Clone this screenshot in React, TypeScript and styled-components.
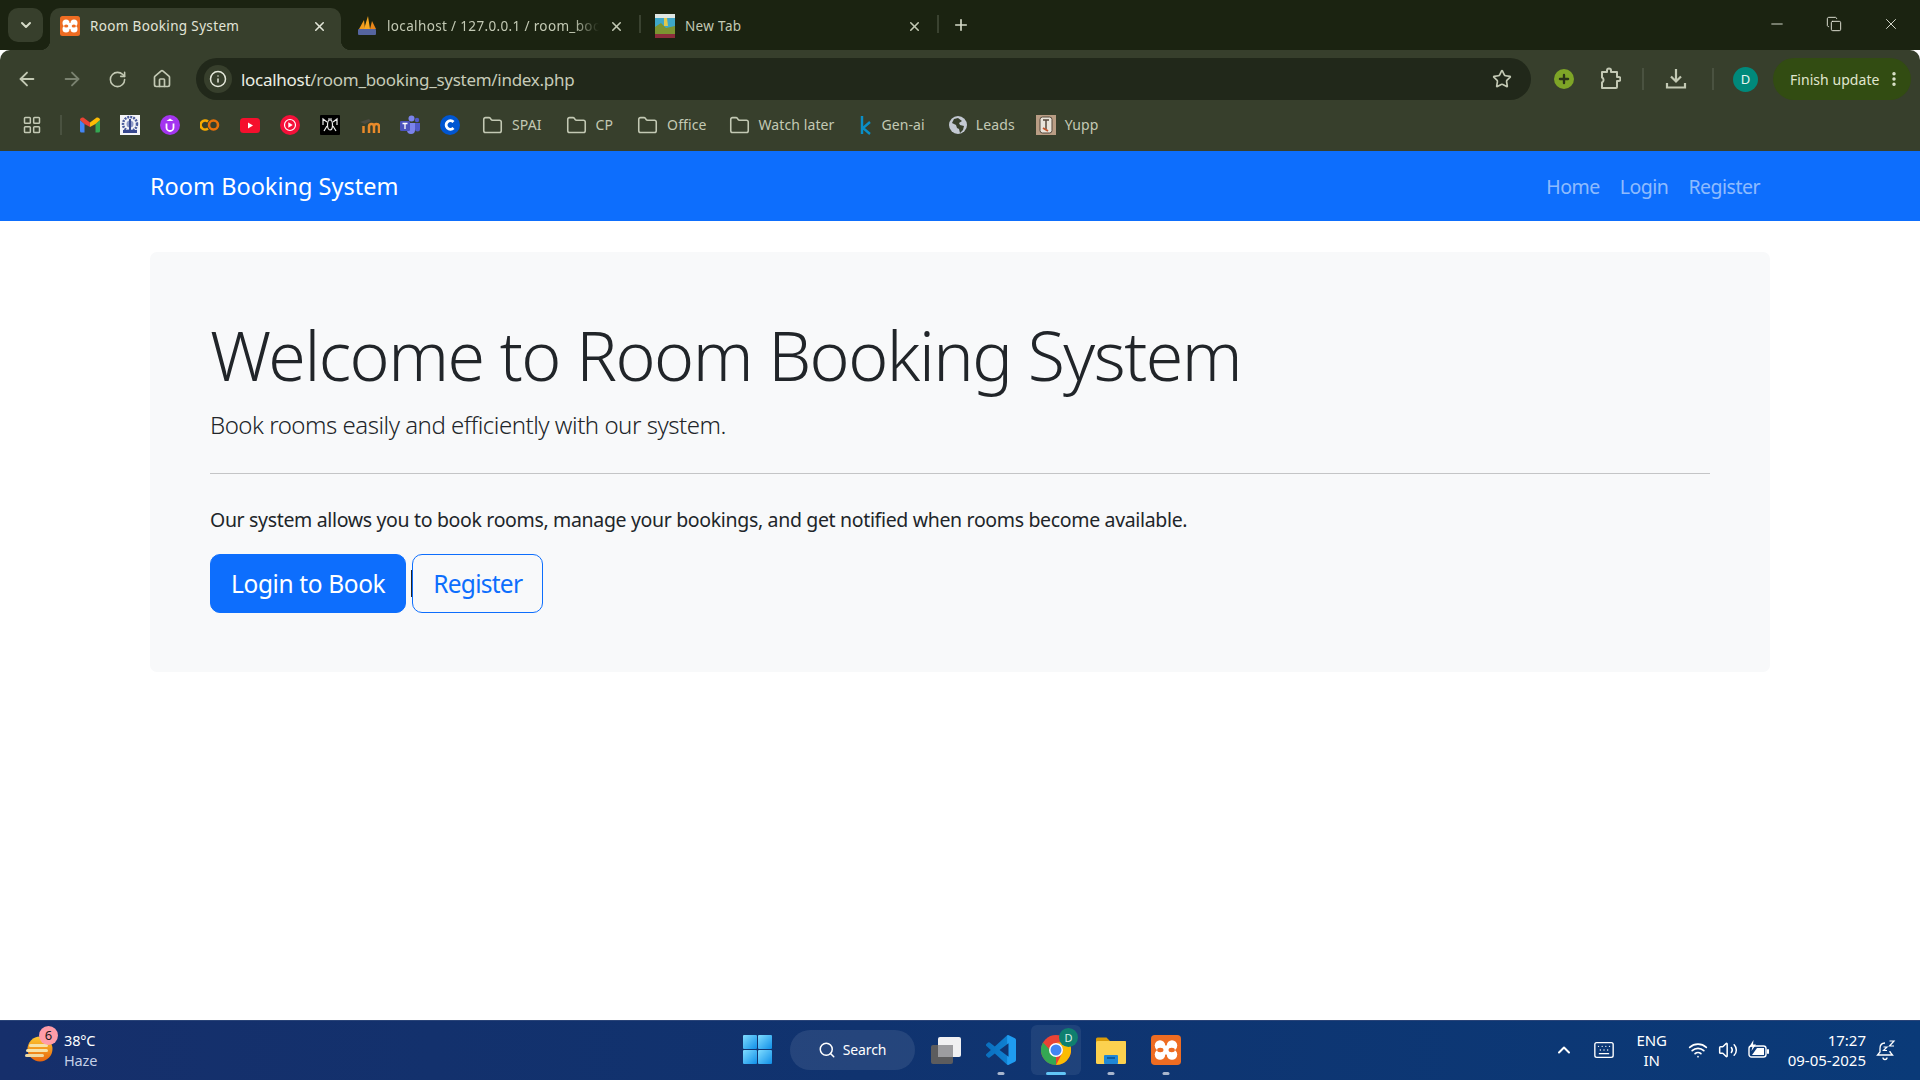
import React from "react";
import styled, { createGlobalStyle } from "styled-components";
import {
  ArrowLeft,
  ArrowRight,
  ChevronDown,
  ChevronUp,
  Folder,
  Home,
  Info,
  Keyboard,
  LayoutGrid,
  Minus,
  Plus,
  RotateCw,
  Search,
  Star,
  Volume2,
  Wifi,
  X,
  MoreVertical,
  Copy,
} from "lucide-react";

const uiFont = `"Noto Sans", "Open Sans", sans-serif`;

const GlobalStyle = createGlobalStyle`
  html, body {
    margin: 0;
    padding: 0;
    height: 100%;
    background: #fff;
    overflow: hidden;
  }
  #root {
    height: 100%;
  }
  * {
    box-sizing: border-box;
  }
`;

const Screen = styled.div`
  height: 1080px;
  display: flex;
  flex-direction: column;
  font-family: ${uiFont};
`;

/* browser chrome */

const TabStrip = styled.div`
  height: 50px;
  background: #1b2311;
  display: flex;
  align-items: flex-end;
  padding-left: 8px;
  color: #d5dac8;
`;

const TabListButton = styled.div`
  width: 35px;
  height: 34px;
  margin: 0 7px 8px 0;
  border-radius: 10px;
  background: #373f2c;
  display: flex;
  align-items: center;
  justify-content: center;
`;

const Tab = styled.div<{ $active?: boolean; $divider?: boolean }>`
  position: relative;
  width: 291px;
  height: 42px;
  margin-right: ${(p) => (p.$active ? "6px" : "7px")};
  padding: 0 14px 6px 10px;
  display: flex;
  align-items: center;
  gap: 10px;
  font-size: 13.5px;
  letter-spacing: 0.35px;
  border-radius: 10px 10px 0 0;
  background: ${(p) => (p.$active ? "#373f2c" : "transparent")};
  color: ${(p) => (p.$active ? "#e2e5d8" : "#c3c9b4")};

  ${(p) =>
    p.$active &&
    `
    &::before, &::after {
      content: "";
      position: absolute;
      bottom: 0;
      width: 10px;
      height: 10px;
      background: radial-gradient(circle at var(--cx) 0, #1b2311 10px, #373f2c 10.5px);
    }
    &::before { left: -10px; --cx: 0; }
    &::after { right: -10px; --cx: 100%; }
  `}

  ${(p) =>
    p.$divider &&
    `
    &::after {
      content: "";
      position: absolute;
      right: -3px;
      top: 7px;
      width: 2px;
      height: 18px;
      background: #3a4230;
    }
  `}
`;

const TabTitle = styled.span<{ $fade?: boolean }>`
  flex: 1;
  height: 20px;
  line-height: 20px;
  white-space: nowrap;
  overflow: hidden;
  ${(p) =>
    p.$fade &&
    `
    -webkit-mask-image: linear-gradient(to right, #000 88%, transparent);
    mask-image: linear-gradient(to right, #000 88%, transparent);
  `}
`;

const NewTab = styled.div`
  margin: 0 0 13px 6px;
  height: 24px;
  width: 24px;
  display: flex;
  align-items: center;
  justify-content: center;
  color: #d5dac8;
`;

const WindowControls = styled.div`
  margin-left: auto;
  height: 50px;
  display: flex;
  align-items: center;
  color: #e8eade;
  padding: 0 20px 3px 0;
  gap: 40px;
`;

const Toolbar = styled.div`
  height: 58px;
  background: #373f2c;
  border-radius: 10px 10px 0 0;
  display: flex;
  align-items: center;
  padding: 0 8px 0 16px;
  color: #c3c9b4;
`;

const NavButtons = styled.div`
  display: flex;
  align-items: center;
  gap: 23px;
  width: 180px;
`;

const NavSlot = styled.div`
  width: 22px;
  display: flex;
  justify-content: center;
`;

const Omnibox = styled.div`
  width: 1335px;
  height: 42px;
  border-radius: 21px;
  background: #21281a;
  display: flex;
  align-items: center;
  padding: 0 19px 0 8px;
  color: #e6e9dc;
`;

const SiteInfo = styled.div`
  width: 28px;
  height: 28px;
  border-radius: 50%;
  background: #373f2c;
  display: flex;
  align-items: center;
  justify-content: center;
  margin-right: 9px;
`;

const Url = styled.span`
  flex: 1;
  font-size: 17px;
  letter-spacing: -0.28px;
  color: #c6cbb8;
  b {
    font-weight: 400;
    color: #eceee3;
  }
`;

const ActionSlot = styled.div<{ $w: number }>`
  width: ${(p) => p.$w}px;
  display: flex;
  justify-content: flex-end;
  align-items: center;
`;

const ToolbarDivider = styled.div`
  width: 2px;
  height: 22px;
  background: #4a5240;
  margin-right: 18px;
`;

const GreenPlus = styled.div`
  width: 20px;
  height: 20px;
  border-radius: 50%;
  background: #7ea527;
  color: #2a3318;
  display: flex;
  align-items: center;
  justify-content: center;
`;

const Avatar = styled.div`
  width: 25px;
  height: 25px;
  border-radius: 50%;
  background: #00897b;
  color: #e8f5f0;
  font-size: 13px;
  display: flex;
  align-items: center;
  justify-content: center;
`;

const UpdatePill = styled.div`
  height: 42px;
  width: 138px;
  margin-left: 15px;
  border-radius: 21px;
  background: #324c12;
  color: #e0e6cf;
  font-size: 14px;
  letter-spacing: 0.05px;
  display: flex;
  align-items: center;
  justify-content: space-between;
  padding: 0 8px 0 17px;
  white-space: nowrap;
`;

const BookmarksBar = styled.div`
  height: 43px;
  background: #373f2c;
  display: flex;
  align-items: flex-start;
  padding: 7px 0 0 22px;
  color: #c3c9b4;
  font-size: 14px;
  letter-spacing: 0.1px;
`;

const BookmarkDivider = styled.div`
  width: 2px;
  height: 20px;
  background: #4a5240;
  margin: 0 8px 0 18px;
`;

const IconSlot = styled.div`
  width: 40px;
  height: 20px;
  display: flex;
  align-items: center;
  justify-content: center;
`;

const Bookmark = styled.div<{ $ml: number }>`
  margin-left: ${(p) => p.$ml}px;
  height: 20px;
  display: flex;
  align-items: center;
  gap: 9px;
  white-space: nowrap;
`;

const BookmarkLabel = styled.span`
  margin-top: -2px;
`;

/* page */

const Navbar = styled.nav`
  height: 70px;
  background: #0d6efd;
  padding: 0 150px;
  display: flex;
  align-items: center;
  justify-content: space-between;
`;

const Brand = styled.a`
  color: #fff;
  font-size: 23.5px;
`;

const NavLinks = styled.div`
  display: flex;
`;

const NavLink = styled.a`
  padding: 0 10px;
  font-size: 19.5px;
  letter-spacing: -0.5px;
  color: rgba(255, 255, 255, 0.55);
`;

const Main = styled.main`
  flex: 1;
  padding: 31px 150px 0;
  background: #fff;
`;

const Jumbotron = styled.section`
  height: 420px;
  background: #f8f9fa;
  border-radius: 7px;
  padding: 60px;
  color: #212529;
`;

const Display = styled.h1`
  margin: 1px 0 0;
  font-size: 68px;
  font-weight: 300;
  line-height: 84px;
  letter-spacing: -1.5px;
  white-space: nowrap;
`;

const Lead = styled.p`
  margin: 9px 0 0;
  font-size: 24px;
  font-weight: 300;
  line-height: 37px;
  letter-spacing: -0.48px;
`;

const Rule = styled.hr`
  margin: 30px 0 0;
  border: 0;
  border-top: 1px solid #c4c5c6;
`;

const BodyText = styled.p`
  margin: 31px 0 0;
  font-size: 19.5px;
  line-height: 30px;
  letter-spacing: -0.335px;
`;

const ButtonRow = styled.div`
  margin-top: 19px;
  display: flex;
  align-items: center;
`;

const Button = styled.a<{ $outline?: boolean }>`
  height: 59px;
  padding: 0 20px;
  border-radius: 10px;
  display: flex;
  align-items: center;
  font-size: 24.5px;
  letter-spacing: ${(p) => (p.$outline ? "-0.75px" : "-0.38px")};
  border: 1px solid #0d6efd;
  background: ${(p) => (p.$outline ? "transparent" : "#0d6efd")};
  color: ${(p) => (p.$outline ? "#0d6efd" : "#fff")};
`;

const Caret = styled.span`
  width: 1px;
  height: 27px;
  margin-left: 5px;
  background: #212529;
`;

/* taskbar */

const Taskbar = styled.footer`
  height: 60px;
  padding-bottom: 2px;
  background: linear-gradient(90deg, #162f6b 0%, #10336f 45%, #0a3a78 100%);
  border-top: 1px solid #2a4478;
  display: grid;
  grid-template-columns: 1fr auto 1fr;
  align-items: center;
  color: #fff;
`;

const Weather = styled.div`
  display: flex;
  align-items: center;
  padding-left: 25px;
  gap: 11px;
`;

const WeatherIcon = styled.div`
  position: relative;
  width: 28px;
  height: 28px;
`;

const WeatherBadge = styled.span`
  position: absolute;
  top: -10px;
  left: 14px;
  width: 19px;
  height: 19px;
  border-radius: 50%;
  background: #ff9ca8;
  color: #1a1a1a;
  font-size: 13px;
  display: flex;
  align-items: center;
  justify-content: center;
`;

const TwoLines = styled.div<{ $align?: string }>`
  display: flex;
  flex-direction: column;
  align-items: ${(p) => p.$align || "flex-start"};
  font-size: 14.5px;
  line-height: 20px;
  letter-spacing: -0.15px;
`;

const Muted = styled.span`
  color: #c3cfe6;
`;

const TaskIcons = styled.div`
  display: flex;
  align-items: center;
  margin-left: 16px;
`;

const SearchPill = styled.div`
  width: 125px;
  height: 40px;
  margin: 0 4px 0 18px;
  border-radius: 20px;
  background: rgba(255, 255, 255, 0.09);
  display: flex;
  align-items: center;
  justify-content: center;
  gap: 7px;
  font-size: 14px;
  letter-spacing: -0.1px;
`;

const TaskSlot = styled.div<{ $active?: boolean; $dot?: boolean }>`
  position: relative;
  width: ${(p) => (p.$active ? "50px" : "55px")};
  margin: ${(p) => (p.$active ? "0 2.5px" : "0")};
  height: 50px;
  border-radius: 6px;
  display: flex;
  align-items: center;
  justify-content: center;
  background: ${(p) => (p.$active ? "rgba(255,255,255,0.07)" : "transparent")};

  ${(p) =>
    p.$dot &&
    `
    &::after {
      content: "";
      position: absolute;
      bottom: 0;
      left: 50%;
      transform: translateX(-50%);
      width: ${p.$active ? "20px" : "7px"};
      height: 3px;
      border-radius: 2px;
      background: ${p.$active ? "#62c6f7" : "#a9b6cd"};
    }
  `}
`;

const ChromeBadge = styled.span`
  position: absolute;
  top: 3px;
  right: 3px;
  width: 19px;
  height: 19px;
  border-radius: 50%;
  background: #0f7f6f;
  color: #d6efe8;
  font-size: 11px;
  display: flex;
  align-items: center;
  justify-content: center;
`;

const Tray = styled.div`
  display: flex;
  align-items: center;
  justify-content: flex-end;
  padding-right: 24px;
`;

const TrayKeyboard = styled.div`
  margin-left: 19px;
  display: flex;
`;

const TrayIcons = styled.div`
  display: flex;
  align-items: center;
  gap: 10px;
  margin: 0 18px 0 21px;
`;

const Language = styled(TwoLines)`
  margin-left: 21px;
  font-size: 15px;
`;

const Clock = styled(TwoLines)`
  margin-right: 10px;
  font-size: 15px;
  letter-spacing: 0;
`;

/* drawn favicons */

const XamppIcon = ({ size = 20 }: { size?: number }) => (
  <svg width={size} height={size} viewBox="0 0 20 20">
    <rect width="20" height="20" rx="2.5" fill="#ee6c22" />
    <circle cx="6" cy="7" r="3.5" fill="#fff" />
    <circle cx="14" cy="7" r="3.5" fill="#fff" />
    <circle cx="6" cy="13" r="3.5" fill="#fff" />
    <circle cx="14" cy="13" r="3.5" fill="#fff" />
    <rect x="6" y="7" width="8" height="6" fill="#fff" />
    <ellipse cx="6.200" cy="10" rx="2.100" ry="1.500" fill="#ee6c22" />
    <ellipse cx="13.800" cy="10" rx="2.100" ry="1.500" fill="#ee6c22" />
  </svg>
);

const PmaIcon = () => (
  <svg width="20" height="22" viewBox="0 0 20 22">
    <path d="M2 14 7 5l1 9z" fill="#f19b1d" />
    <path d="M7 14 11 1l2 13z" fill="#f7a823" />
    <path d="M13 14l2-8 4 8z" fill="#e8861a" />
    <rect x="1" y="14" width="18" height="6" rx="1" fill="#55659f" />
  </svg>
);

const NewTabIcon = () => (
  <svg width="20" height="24" viewBox="0 0 20 24">
    <rect width="20" height="24" rx="2" fill="#3ea7c9" />
    <rect y="0" width="20" height="4" fill="#dfe7e4" />
    <path d="M0 22V13l6-4 5 5 9-2v10z" fill="#7c9431" />
    <rect y="20" width="20" height="4" fill="#8c2c3c" />
    <path d="M9 4h3l1 8H9z" fill="#e3c84c" />
  </svg>
);

const GmailIcon = () => (
  <svg width="20" height="16" viewBox="0 0 20 16">
    <path d="M0 3v11a1.500 1.500 0 0 0 1.500 1.500H4.500V7z" fill="#4285f4" />
    <path d="M15.500 7v8.500h3A1.500 1.500 0 0 0 20 14V3z" fill="#34a853" />
    <path d="M4.500 7 0 3c0-2 2.300-3.200 4-2l6 4.500V10z" fill="#ea4335" />
    <path d="M15.500 7 20 3c0-2-2.300-3.200-4-2l-6 4.500V10z" fill="#fbbc04" />
  </svg>
);

const IitIcon = () => (
  <svg width="20" height="20" viewBox="0 0 20 20">
    <rect width="20" height="20" fill="#f4f4f8" />
    <circle cx="10" cy="9" r="7" fill="none" stroke="#4a5a9c" strokeWidth="2.500" strokeDasharray="2 1" />
    <circle cx="10" cy="9" r="3.500" fill="#8d97c5" />
    <path d="M9 4h2v13H9zM3 15h14v3H3z" fill="#37478f" />
  </svg>
);

const UdemyIcon = () => (
  <svg width="20" height="20" viewBox="0 0 20 20">
    <circle cx="10" cy="10" r="10" fill="#a435f0" />
    <path d="M6.500 8.500v4a3.500 3.500 0 0 0 7 0v-4" fill="none" stroke="#fff" strokeWidth="1.800" />
    <path d="M6.500 6 10 3.500 13.500 6z" fill="#fff" />
  </svg>
);

const ColabIcon = () => (
  <svg width="20" height="14" viewBox="0 0 20 14">
    <path d="M8 3.500a4.500 4.500 0 1 0 0 7" fill="none" stroke="#f9ab00" strokeWidth="2.600" />
    <circle cx="13.500" cy="7" r="4.500" fill="none" stroke="#e8710a" strokeWidth="2.600" />
  </svg>
);

const YoutubeIcon = () => (
  <svg width="20" height="15" viewBox="0 0 20 15">
    <rect width="20" height="15" rx="3.500" fill="#f50f2d" />
    <path d="M8 4.500v6l5-3z" fill="#fff" />
  </svg>
);

const YtMusicIcon = () => (
  <svg width="20" height="20" viewBox="0 0 20 20">
    <circle cx="10" cy="10" r="10" fill="#f5103a" />
    <circle cx="10" cy="10" r="5.500" fill="none" stroke="#fff" strokeWidth="1.200" />
    <path d="M8.300 7.300v5.400l4.400-2.700z" fill="#fff" />
  </svg>
);

const SpiderIcon = () => (
  <svg width="20" height="20" viewBox="0 0 20 20">
    <rect width="20" height="20" rx="1" fill="#000" />
    <ellipse cx="10" cy="10" rx="2.500" ry="5" fill="none" stroke="#eee" strokeWidth="1.200" />
    <path d="M7 7 3 4v6m10-3 4-3v6M7 11l-3 5m9-5 3 5M8 4l4 0" fill="none" stroke="#eee" strokeWidth="1.200" />
  </svg>
);

const MoodleIcon = () => (
  <svg width="20" height="15" viewBox="0 0 20 15">
    <path d="M9 15V8.500a2.500 2.500 0 0 1 5 0V15" fill="none" stroke="#e98a2a" strokeWidth="2.500" />
    <path d="M14 8.500a2.500 2.500 0 0 1 5 0V15" fill="none" stroke="#e98a2a" strokeWidth="2.500" />
    <path d="M3.500 15V8" fill="none" stroke="#e98a2a" strokeWidth="2.500" />
    <path d="M0 4 9 1l2 2-6 3z" fill="#4b4b42" />
  </svg>
);

const TeamsIcon = () => (
  <svg width="20" height="20" viewBox="0 0 20 20">
    <circle cx="11.500" cy="3.500" r="3" fill="#7b83eb" />
    <circle cx="17" cy="5" r="2.200" fill="#5059c9" />
    <path d="M7 8h8v7a4 4 0 0 1-8 0z" fill="#7b83eb" />
    <path d="M15 8h5v6a2.500 2.500 0 0 1-5 0z" fill="#5059c9" />
    <rect x="0" y="6" width="10" height="10" rx="1.200" fill="#4b53bc" />
    <path d="M2.500 8.500h5M5 8.500V14" stroke="#fff" strokeWidth="1.300" />
  </svg>
);

const CourseraIcon = () => (
  <svg width="20" height="20" viewBox="0 0 20 20">
    <circle cx="10" cy="10" r="10" fill="#0056d2" />
    <path d="M13.500 7a4.300 4.300 0 1 0 0 6" fill="none" stroke="#fff" strokeWidth="2.800" />
  </svg>
);

const YuppIcon = () => (
  <svg width="20" height="20" viewBox="0 0 20 20">
    <rect width="20" height="20" fill="#b99d84" />
    <rect x="4" y="2" width="12" height="16" rx="2.500" fill="#e9e4da" stroke="#55483d" />
    <path d="M7 5h6M10 5v9" stroke="#55483d" strokeWidth="1.500" />
    <path d="M7 13l5 3" stroke="#c2552c" strokeWidth="2" />
  </svg>
);

const KaggleIcon = () => (
  <svg width="12" height="20" viewBox="0 0 12 20">
    <path d="M2 1v18M10 7l-7 6 7 6" fill="none" stroke="#0a8fc7" strokeWidth="2.400" />
  </svg>
);

const GlobeIcon = () => (
  <svg width="18" height="18" viewBox="0 0 18 18">
    <circle cx="9" cy="9" r="9" fill="#c3c9d2" />
    <path d="M9 2 5 3 3 7l4 2 1 3 2 1 1 4 3-3 1-4-4-1-1-2 3-2z" fill="#373f2c" />
  </svg>
);

const PuzzleIcon = () => (
  <svg width="22" height="24" viewBox="0 0 22 24" fill="none" stroke="currentColor" strokeWidth="2" strokeLinejoin="round">
    <path d="M3 5h5V3.500a2 2 0 0 1 4 0V5h6v5h1.500a2 2 0 0 1 0 4H18v6a1 1 0 0 1-1 1H3v-5.500a2.500 2.500 0 0 0 1.500-2.500A2.500 2.500 0 0 0 3 10.500V5z" />
  </svg>
);

const DownloadIcon = () => (
  <svg width="22" height="22" viewBox="0 0 22 22" fill="none" stroke="currentColor" strokeWidth="2.200">
    <path d="M11 1v12M6 8.500l5 5 5-5" />
    <path d="M2 15v4.500h18V15" />
  </svg>
);

const BatteryIcon = () => (
  <svg width="22" height="20" viewBox="0 0 22 20">
    <rect x="1" y="6" width="17" height="11" rx="2.500" fill="none" stroke="#fff" strokeWidth="1.400" />
    <path d="M9 8h7v7H4z" fill="#fff" />
    <rect x="19" y="9" width="2" height="5" rx="1" fill="#fff" />
    <path d="M5.500 0 1.500 6.500h3L3.500 11l4.500-6.500H5z" fill="#fff" />
  </svg>
);

const SnoozeBell = () => (
  <svg width="20" height="22" viewBox="0 0 20 22" fill="none" stroke="#fff" strokeWidth="1.300">
    <path d="M9 4C5.500 4 4 6.500 4 9.500V13l-2.500 3h15L14 13v-1" />
    <path d="M7 18.500a2 2 0 0 0 4 0" />
    <path d="M7.500 8h3.500l-3.500 3.500H11M13.500 2H18l-4.500 5H18" strokeWidth="1.200" />
  </svg>
);

const WeatherSun = () => (
  <svg width="28" height="28" viewBox="0 0 28 28">
    <defs>
      <linearGradient id="sun" x1="0" y1="0" x2="0" y2="1">
        <stop offset="0" stopColor="#fdc830" />
        <stop offset="1" stopColor="#e8650d" />
      </linearGradient>
    </defs>
    <circle cx="15" cy="13" r="12.500" fill="url(#sun)" />
    <rect x="4" y="8" width="19" height="3" rx="1.500" fill="#f6e2a8" />
    <rect x="1" y="13" width="22" height="3" rx="1.500" fill="#f6e2a8" />
    <rect x="0" y="18" width="19" height="3" rx="1.500" fill="#f0d9a0" />
  </svg>
);

const WindowsLogo = () => (
  <svg width="29" height="29" viewBox="0 0 29 29">
    <defs>
      <linearGradient id="win" x1="0" y1="0" x2="1" y2="1">
        <stop offset="0" stopColor="#7fdcff" />
        <stop offset="1" stopColor="#0f8fe8" />
      </linearGradient>
    </defs>
    <rect width="14" height="14" rx="1" fill="url(#win)" />
    <rect x="15" width="14" height="14" rx="1" fill="url(#win)" />
    <rect y="15" width="14" height="14" rx="1" fill="url(#win)" />
    <rect x="15" y="15" width="14" height="14" rx="1" fill="url(#win)" />
  </svg>
);

const TaskViewIcon = () => (
  <svg width="30" height="28" viewBox="0 0 30 28">
    <rect x="0" y="9" width="22" height="19" rx="2" fill="#5c5c5e" />
    <rect x="7" y="1" width="23" height="20" rx="2" fill="#f0f0f2" />
    <rect x="7" y="9" width="15" height="12" fill="#9c9ca0" />
  </svg>
);

const VsCodeIcon = () => (
  <svg width="30" height="30" viewBox="0 0 24 24">
    <defs>
      <linearGradient id="vsc" x1="0" y1="0" x2="1" y2="0">
        <stop offset="0" stopColor="#0a6fbe" />
        <stop offset="0.7" stopColor="#0f80d0" />
        <stop offset="0.72" stopColor="#1f9cf0" />
      </linearGradient>
    </defs>
    <path
      d="M23.150 2.587 18.210.21a1.494 1.494 0 0 0-1.705.29l-9.460 8.630-4.120-3.128a.999.999 0 0 0-1.276.057L.327 7.261A1 1 0 0 0 .326 8.740L3.899 12 .326 15.260a1 1 0 0 0 .001 1.479L1.650 17.940a.999.999 0 0 0 1.276.057l4.120-3.128 9.460 8.630a1.492 1.492 0 0 0 1.704.290l4.942-2.377A1.500 1.500 0 0 0 24 20.060V3.939a1.500 1.500 0 0 0-.850-1.352zm-5.146 14.861L10.826 12l7.178-5.448v10.896z"
      fill="url(#vsc)"
    />
  </svg>
);

const ChromeIcon = () => (
  <svg width="30" height="30" viewBox="0 0 30 30">
    <circle cx="15" cy="15" r="15" fill="#ea4335" />
    <path d="M15 30A15 15 0 0 1 2 7.500L9 15a6 6 0 0 0 6 6z" fill="#34a853" />
    <path d="M15 30a15 15 0 0 0 13-22.500H15a7.500 7.500 0 0 1 6 11z" fill="#fbbc04" />
    <circle cx="15" cy="15" r="7" fill="#fff" />
    <circle cx="15" cy="15" r="5.500" fill="#4285f4" />
  </svg>
);

const FilesIcon = () => (
  <svg width="30" height="28" viewBox="0 0 30 28">
    <path d="M0 3a1.500 1.500 0 0 1 1.500-1.500h9L14 5h16v6H0z" fill="#d99b08" />
    <rect y="5" width="30" height="23" rx="1.500" fill="#fcd14f" />
    <rect x="8" y="19" width="14" height="9" rx="1" fill="#1f87d6" />
    <rect x="11" y="21" width="8" height="2" fill="#0b5da3" />
  </svg>
);

export default function App() {
  return (
    <Screen>
      <GlobalStyle />

      <TabStrip>
        <TabListButton>
          <ChevronDown size={16} strokeWidth={3} />
        </TabListButton>
        <Tab $active>
          <XamppIcon />
          <TabTitle>Room Booking System</TabTitle>
          <X size={15} strokeWidth={2.5} />
        </Tab>
        <Tab $divider>
          <PmaIcon />
          <TabTitle $fade>localhost / 127.0.0.1 / room_booking_system</TabTitle>
          <X size={15} strokeWidth={2.5} />
        </Tab>
        <Tab $divider>
          <NewTabIcon />
          <TabTitle>New Tab</TabTitle>
          <X size={15} strokeWidth={2.5} />
        </Tab>
        <NewTab>
          <Plus size={18} strokeWidth={2.2} />
        </NewTab>
        <WindowControls>
          <Minus size={18} strokeWidth={1.2} />
          <Copy size={16} strokeWidth={1.4} />
          <X size={18} strokeWidth={1.2} />
        </WindowControls>
      </TabStrip>

      <Toolbar>
        <NavButtons>
          <NavSlot><ArrowLeft size={22} strokeWidth={2} /></NavSlot>
          <NavSlot><ArrowRight size={22} strokeWidth={2} color="#7a8270" /></NavSlot>
          <NavSlot><RotateCw size={19} strokeWidth={2} /></NavSlot>
          <NavSlot><Home size={20} strokeWidth={2} /></NavSlot>
        </NavButtons>
        <Omnibox>
          <SiteInfo>
            <Info size={18} strokeWidth={2} />
          </SiteInfo>
          <Url>
            <b>localhost</b>/room_booking_system/index.php
          </Url>
          <Star size={20} strokeWidth={2} color="#c3c9b4" />
        </Omnibox>
        <ActionSlot $w={43}>
          <GreenPlus>
            <Plus size={14} strokeWidth={4} />
          </GreenPlus>
        </ActionSlot>
        <ActionSlot $w={47}>
          <PuzzleIcon />
        </ActionSlot>
        <ActionSlot $w={41}>
          <ToolbarDivider />
        </ActionSlot>
        <ActionSlot $w={25}>
          <DownloadIcon />
        </ActionSlot>
        <ActionSlot $w={45}>
          <ToolbarDivider />
        </ActionSlot>
        <ActionSlot $w={26}>
          <Avatar>D</Avatar>
        </ActionSlot>
        <UpdatePill>
          Finish update
          <MoreVertical size={18} strokeWidth={2.6} />
        </UpdatePill>
      </Toolbar>

      <BookmarksBar>
        <LayoutGrid size={20} strokeWidth={1.8} />
        <BookmarkDivider />
        <IconSlot><GmailIcon /></IconSlot>
        <IconSlot><IitIcon /></IconSlot>
        <IconSlot><UdemyIcon /></IconSlot>
        <IconSlot><ColabIcon /></IconSlot>
        <IconSlot><YoutubeIcon /></IconSlot>
        <IconSlot><YtMusicIcon /></IconSlot>
        <IconSlot><SpiderIcon /></IconSlot>
        <IconSlot><MoodleIcon /></IconSlot>
        <IconSlot><TeamsIcon /></IconSlot>
        <IconSlot><CourseraIcon /></IconSlot>
        <Bookmark $ml={12}><Folder size={21} strokeWidth={1.8} /><BookmarkLabel>SPAI</BookmarkLabel></Bookmark>
        <Bookmark $ml={24}><Folder size={21} strokeWidth={1.8} /><BookmarkLabel>CP</BookmarkLabel></Bookmark>
        <Bookmark $ml={24}><Folder size={21} strokeWidth={1.8} /><BookmarkLabel>Office</BookmarkLabel></Bookmark>
        <Bookmark $ml={22}><Folder size={21} strokeWidth={1.8} /><BookmarkLabel>Watch later</BookmarkLabel></Bookmark>
        <Bookmark $ml={26}><KaggleIcon /><BookmarkLabel>Gen-ai</BookmarkLabel></Bookmark>
        <Bookmark $ml={24}><GlobeIcon /><BookmarkLabel>Leads</BookmarkLabel></Bookmark>
        <Bookmark $ml={21}><YuppIcon /><BookmarkLabel>Yupp</BookmarkLabel></Bookmark>
      </BookmarksBar>

      <Navbar>
        <Brand>Room Booking System</Brand>
        <NavLinks>
          <NavLink>Home</NavLink>
          <NavLink>Login</NavLink>
          <NavLink>Register</NavLink>
        </NavLinks>
      </Navbar>

      <Main>
        <Jumbotron>
          <Display>Welcome to Room Booking System</Display>
          <Lead>Book rooms easily and efficiently with our system.</Lead>
          <Rule />
          <BodyText>
            Our system allows you to book rooms, manage your bookings, and get
            notified when rooms become available.
          </BodyText>
          <ButtonRow>
            <Button>Login to Book</Button>
            <Caret />
            <Button $outline>Register</Button>
          </ButtonRow>
        </Jumbotron>
      </Main>

      <Taskbar>
        <Weather>
          <WeatherIcon>
            <WeatherSun />
            <WeatherBadge>6</WeatherBadge>
          </WeatherIcon>
          <TwoLines>
            <span>38°C</span>
            <Muted>Haze</Muted>
          </TwoLines>
        </Weather>
        <TaskIcons>
          <WindowsLogo />
          <SearchPill>
            <Search size={18} strokeWidth={2} />
            Search
          </SearchPill>
          <TaskSlot><TaskViewIcon /></TaskSlot>
          <TaskSlot $dot><VsCodeIcon /></TaskSlot>
          <TaskSlot $active $dot>
            <ChromeIcon />
            <ChromeBadge>D</ChromeBadge>
          </TaskSlot>
          <TaskSlot $dot><FilesIcon /></TaskSlot>
          <TaskSlot $dot><XamppIcon size={30} /></TaskSlot>
        </TaskIcons>
        <Tray>
          <ChevronUp size={20} strokeWidth={2.4} />
          <TrayKeyboard>
            <Keyboard size={22} strokeWidth={1.5} />
          </TrayKeyboard>
          <Language $align="center">
            <span>ENG</span>
            <span>IN</span>
          </Language>
          <TrayIcons>
            <Wifi size={20} strokeWidth={2} />
            <Volume2 size={20} strokeWidth={1.8} />
            <BatteryIcon />
          </TrayIcons>
          <Clock $align="flex-end">
            <span>17:27</span>
            <span>09-05-2025</span>
          </Clock>
          <SnoozeBell />
        </Tray>
      </Taskbar>
    </Screen>
  );
}
